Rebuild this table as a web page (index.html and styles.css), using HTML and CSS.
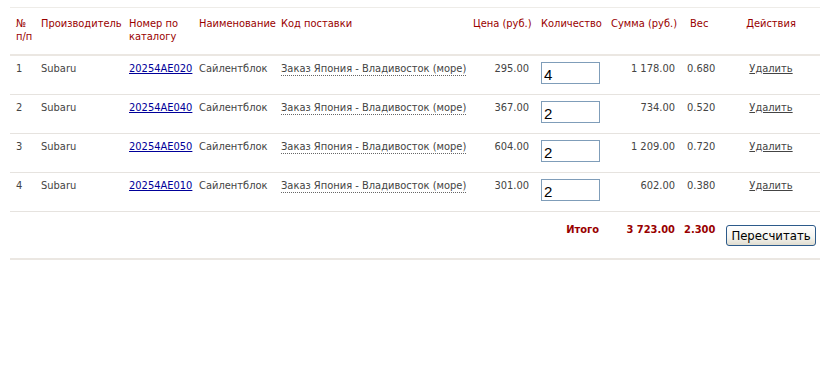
FILE: index.html
```html
<!DOCTYPE html>
<html lang="ru">
<head>
  <meta charset="UTF-8" />
  <title>Корзина</title>
  <link rel="stylesheet" href="styles.css">
</head>
<body>
  <table class="cart">
    <colgroup>
      <col class="c-num"><col class="c-brand"><col class="c-art"><col class="c-name">
      <col class="c-supply"><col class="c-price"><col class="c-qty"><col class="c-sum">
      <col class="c-weight"><col class="c-act">
    </colgroup>
    <thead>
      <tr>
        <th>№<br>п/п</th>
        <th>Производитель</th>
        <th>Номер по<br>каталогу</th>
        <th>Наименование</th>
        <th>Код поставки</th>
        <th class="num">Цена (руб.)</th>
        <th>Количество</th>
        <th class="num">Сумма (руб.)</th>
        <th class="weight">Вес</th>
        <th class="act">Действия</th>
      </tr>
    </thead>
    <tbody>
      <tr>
        <td>1</td><td>Subaru</td><td><a href="#" class="art">20254AE020</a></td><td>Сайлентблок</td>
        <td><span class="supply">Заказ Япония - Владивосток (море)</span></td>
        <td class="num">295.00</td><td><input class="qty" type="text" value="4"></td>
        <td class="num">1 178.00</td><td>0.680</td><td class="act"><a href="#" class="del">Удалить</a></td>
      </tr>
      <tr>
        <td>2</td><td>Subaru</td><td><a href="#" class="art">20254AE040</a></td><td>Сайлентблок</td>
        <td><span class="supply">Заказ Япония - Владивосток (море)</span></td>
        <td class="num">367.00</td><td><input class="qty" type="text" value="2"></td>
        <td class="num">734.00</td><td>0.520</td><td class="act"><a href="#" class="del">Удалить</a></td>
      </tr>
      <tr>
        <td>3</td><td>Subaru</td><td><a href="#" class="art">20254AE050</a></td><td>Сайлентблок</td>
        <td><span class="supply">Заказ Япония - Владивосток (море)</span></td>
        <td class="num">604.00</td><td><input class="qty" type="text" value="2"></td>
        <td class="num">1 209.00</td><td>0.720</td><td class="act"><a href="#" class="del">Удалить</a></td>
      </tr>
      <tr>
        <td>4</td><td>Subaru</td><td><a href="#" class="art">20254AE010</a></td><td>Сайлентблок</td>
        <td><span class="supply">Заказ Япония - Владивосток (море)</span></td>
        <td class="num">301.00</td><td><input class="qty" type="text" value="2"></td>
        <td class="num">602.00</td><td>0.380</td><td class="act"><a href="#" class="del">Удалить</a></td>
      </tr>
    </tbody>
    <tfoot>
      <tr>
        <td colspan="6"></td>
        <td class="num total">Итого</td>
        <td class="num total">3 723.00</td>
        <td class="total weight-total">2.300</td>
        <td class="act"><button class="recalc">Пересчитать</button></td>
      </tr>
    </tfoot>
  </table>
</body>
</html>
```

FILE: styles.css
```css
body {
  margin: 7px 10px;
  background: #fff;
  font-family: "DejaVu Sans Condensed", "Liberation Sans", sans-serif;
  font-size: 11px;
  color: #444;
}

.cart {
  width: 810px;
  border-collapse: collapse;
  table-layout: fixed;
  border-top: 1px solid #eeece8;
  border-bottom: 2px solid #ebe7e2;
}

.c-num { width: 25px; }
.c-brand { width: 88px; }
.c-art { width: 70px; }
.c-name { width: 82px; }
.c-supply { width: 192px; }
.c-price { width: 68px; }
.c-qty { width: 70px; }
.c-sum { width: 76px; }
.c-weight { width: 45px; }
.c-act { width: 94px; }

.cart th {
  font-weight: normal;
  color: #990000;
  text-align: left;
  vertical-align: top;
  line-height: 13px;
  padding: 9px 6px 11px;
  border-bottom: 2px solid #ebe7e2;
  white-space: nowrap;
}

.cart td {
  vertical-align: top;
  line-height: 13px;
  padding: 6px 6px 0;
  height: 32px;
  border-bottom: 1px solid #e6e3df;
  white-space: nowrap;
}

.cart .num { text-align: right; }
.cart th.weight { padding-left: 9px; }

.cart .act {
  text-align: center;
  padding-left: 0;
  padding-right: 4px;
}

.art {
  color: #000099;
  text-decoration: underline;
}

.supply {
  border-bottom: 1px dotted #666;
}

.del {
  color: #444;
  text-decoration: underline;
}

.qty {
  box-sizing: border-box;
  width: 59px;
  height: 22px;
  margin: 0;
  padding: 2px 2px 0;
  border: 1px solid #7f9db9;
  font-family: "Liberation Sans", sans-serif;
  font-size: 15px;
  color: #000;
}

.cart tfoot td {
  padding-top: 11px;
  height: 35px;
  border-bottom: none;
}

.total {
  color: #990000;
  font-weight: bold;
}

.cart .weight-total { padding-left: 3px; }

.recalc {
  width: 90px;
  height: 21px;
  margin-top: 2px;
  padding: 0;
  font-family: "DejaVu Sans Condensed", "Liberation Sans", sans-serif;
  font-size: 13px;
  color: #000;
  background: linear-gradient(#fff, #f4f3ee 60%, #e0ddd0);
  border: 1px solid #2c5a8a;
  border-radius: 3px;
}
```
